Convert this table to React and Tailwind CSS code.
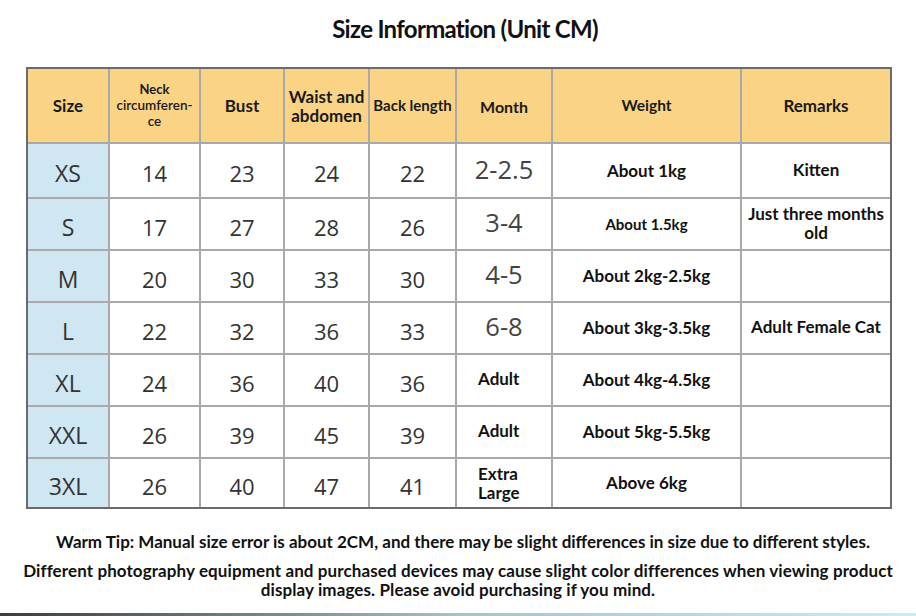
import React from "react"

const rows = [
  { size: "XS", neck: "14", bust: "23", waist: "24", back: "22", month: "2-2.5", weight: "About 1kg", remark: "Kitten" },
  { size: "S", neck: "17", bust: "27", waist: "28", back: "26", month: "3-4", weight: "About 1.5kg", small: true, remark: "Just three months old" },
  { size: "M", neck: "20", bust: "30", waist: "33", back: "30", month: "4-5", weight: "About 2kg-2.5kg", remark: "" },
  { size: "L", neck: "22", bust: "32", waist: "36", back: "33", month: "6-8", weight: "About 3kg-3.5kg", remark: "Adult Female Cat" },
  { size: "XL", neck: "24", bust: "36", waist: "40", back: "36", month: "Adult", word: true, weight: "About 4kg-4.5kg", remark: "" },
  { size: "XXL", neck: "26", bust: "39", waist: "45", back: "39", month: "Adult", word: true, weight: "About 5kg-5.5kg", remark: "" },
  { size: "3XL", neck: "26", bust: "40", waist: "47", back: "41", month: "Extra Large", word: true, weight: "Above 6kg", remark: "" },
]

const lato = "font-['Lato','Liberation_Sans',sans-serif]"
const num = "font-['Open_Sans','Liberation_Sans',sans-serif] text-[22px] text-[#333] pt-[6px]"

function Cell({ className = "", children }) {
  return <div className={`bg-white flex items-center justify-center ${className}`}>{children}</div>
}

export default function App() {
  return (
    <div className={`w-[916px] h-[616px] bg-white flex flex-col ${lato}`}>
      <h1 className="h-[58px] pl-[14px] flex items-center justify-center text-[24px] font-bold text-[#111] tracking-[-0.7px]">
        Size Information (Unit CM)
      </h1>

      <div className="ml-[26px] mt-[9px] w-[866px] border-2 border-[#6b6b6b] bg-[#a9a9a9] grid grid-cols-[80px_89px_82px_83px_85px_94px_187px_148px] grid-rows-[73px_53px_50px_50px_50px_50px_50px_48px] gap-[2px]">
        <Cell className="!bg-[#fad385] text-[17px] font-bold text-[#1a1a1a]">Size</Cell>
        <Cell className="!bg-[#fad385] flex-col text-[#1a1a1a] leading-[16px] text-[13.5px] pb-[2px]">
          <span className="block font-bold text-[13px]">Neck</span>
          <span className="block font-semibold">circumferen-</span>
          <span className="block font-semibold">ce</span>
        </Cell>
        <Cell className="!bg-[#fad385] text-[17px] font-bold text-[#1a1a1a]">Bust</Cell>
        <Cell className="!bg-[#fad385] text-[17px] font-bold text-[#1a1a1a] leading-[19px] text-center">
          Waist and<br />abdomen
        </Cell>
        <Cell className="!bg-[#fad385] text-[15px] font-bold text-[#1a1a1a]">Back length</Cell>
        <Cell className="!bg-[#fad385] text-[16px] font-bold text-[#1a1a1a] pt-[2px]">Month</Cell>
        <Cell className="!bg-[#fad385] text-[15.5px] font-bold text-[#1a1a1a]">Weight</Cell>
        <Cell className="!bg-[#fad385] text-[17px] font-bold text-[#1a1a1a]">Remarks</Cell>

        {rows.map((r) => (
          <React.Fragment key={r.size}>
            <Cell className={`!bg-[#cfe7f3] ${num} !text-[23px]`}>{r.size}</Cell>
            <Cell className={num}>{r.neck}</Cell>
            <Cell className={num}>{r.bust}</Cell>
            <Cell className={num}>{r.waist}</Cell>
            <Cell className={num}>{r.back}</Cell>
            {r.word ? (
              <Cell className="!justify-start pl-[21px] text-[17px] font-bold text-[#111] leading-[19px] pb-[4px]">
                {r.month === "Extra Large" ? <span className="pt-[4px]">Extra<br />Large</span> : r.month}
              </Cell>
            ) : (
              <Cell className="font-['Open_Sans','Liberation_Sans',sans-serif] text-[25.5px] text-[#444] pb-[3px]">{r.month}</Cell>
            )}
            <Cell className={`font-bold text-[#111] ${r.small ? "text-[15px]" : "text-[17px]"}`}>{r.weight}</Cell>
            <Cell className="font-bold text-[#111] text-[17px] leading-[19px] text-center pb-[3px]">{r.remark}</Cell>
          </React.Fragment>
        ))}
      </div>

      <p className="mt-[23px] pl-[10px] text-center text-[17px] font-bold text-[#111] leading-[20px]">
        Warm Tip: Manual size error is about 2CM, and there may be slight differences in size due to different styles.
      </p>
      <p className="mt-[9px] px-[16px] text-center text-[17px] font-bold text-[#111] leading-[19px] tracking-[0.1px]">
        Different photography equipment and purchased devices may cause slight color differences when viewing product display images. Please avoid purchasing if you mind.
      </p>

      <div className="mt-auto h-[3px] bg-gradient-to-r from-[#3c3c3c] via-[#a9c2c4] to-[#c9eef0]" />
    </div>
  )
}
